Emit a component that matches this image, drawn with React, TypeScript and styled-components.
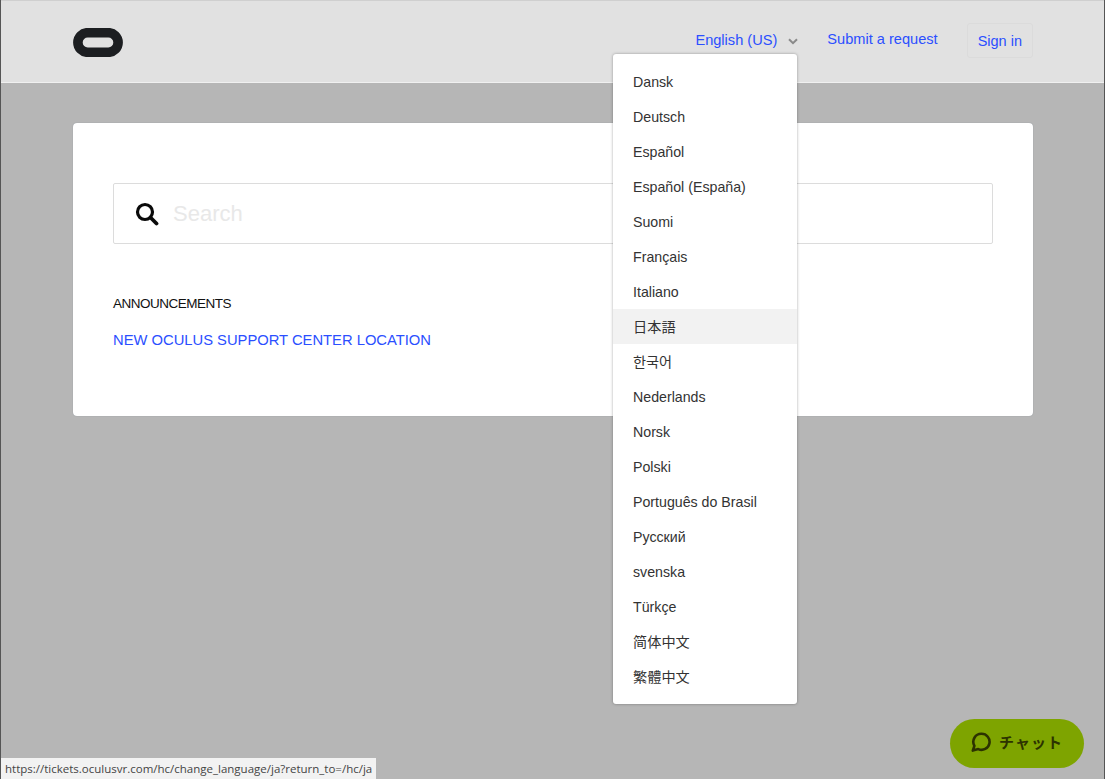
import React from "react";
import styled, { createGlobalStyle } from "styled-components";

const Global = createGlobalStyle`
  html, body { margin: 0; padding: 0; background: #b6b6b6; }
  body { font-family: "Liberation Sans", Arial, "Noto Sans CJK JP", sans-serif; }
  a { text-decoration: none; }
`;

const Page = styled.div`
  position: relative;
  width: 1105px;
  height: 779px;
  overflow: hidden;
  background: #b6b6b6;
  border-left: 1px solid #555;
  border-right: 1px solid #555;
  box-sizing: border-box;
`;

const Header = styled.header`
  height: 83px;
  box-sizing: border-box;
  background: #e1e1e1;
  border-top: 1px solid #cfcfcf;
  border-bottom: 1px solid #f0f0f0;
  padding: 0 71px 0 72px;
  display: flex;
  align-items: center;
  justify-content: space-between;
`;

const Logo = styled.svg`
  width: 50px;
  height: 29px;
  margin-top: 2px;
`;

const Nav = styled.nav`
  display: flex;
  align-items: center;
`;

const LangToggle = styled.a`
  display: flex;
  align-items: center;
  color: #2b4fff;
  font-size: 14.6px;
  margin-right: 29px;
  position: relative;
  top: -2px;
`;

const Chevron = styled.svg`
  width: 10px;
  height: 7px;
  margin-left: 11px;
  margin-top: 4px;
`;

const NavLink = styled.a`
  color: #2b4fff;
  font-size: 14.6px;
  margin-right: 29px;
  position: relative;
  top: -3px;
`;

const SignIn = styled.a`
  color: #2b4fff;
  font-size: 14.5px;
  height: 33px;
  line-height: 34px;
  padding: 0 10px;
  border: 1px solid #dbdbdb;
  border-radius: 3px;
  margin-top: -2px;
`;

const Main = styled.main`
  padding: 40px 71px 0 72px;
`;

const Card = styled.section`
  background: #fff;
  border-radius: 4px;
  height: 293px;
  box-sizing: border-box;
  padding: 60px 40px 0;
  box-shadow: 0 0 1px rgba(60, 70, 90, 0.45);
`;

const SearchBox = styled.div`
  height: 61px;
  box-sizing: border-box;
  border: 1px solid #dcdcdc;
  border-radius: 2px;
  display: flex;
  align-items: center;
  padding-left: 21px;
`;

const SearchIcon = styled.svg`
  width: 24px;
  height: 24px;
  flex: none;
  margin-right: 14px;
`;

const Placeholder = styled.span`
  font-size: 22px;
  color: #e8e8e8;
`;

const SectionTitle = styled.h2`
  margin: 52px 0 0;
  font-size: 13.5px;
  font-weight: 400;
  line-height: 16px;
  color: #111;
  letter-spacing: -0.5px;
`;

const Announcement = styled.a`
  display: block;
  margin-top: 20px;
  font-size: 14.75px;
  line-height: 17px;
  color: #2b4fff;
`;

const Menu = styled.ul`
  position: absolute;
  left: 612px;
  top: 54px;
  width: 184px;
  height: 650px;
  box-sizing: border-box;
  margin: 0;
  padding: 10px 0 0;
  list-style: none;
  background: #fff;
  border-radius: 3px;
  box-shadow: 0 0 3px rgba(0, 0, 0, 0.35);
`;

const MenuItem = styled.li<{ $active?: boolean }>`
  height: 35px;
  line-height: 37px;
  padding-left: 20px;
  font-size: 14.2px;
  color: #333;
  background: ${(p) => (p.$active ? "#f2f2f2" : "transparent")};
`;

const ChatButton = styled.button`
  position: absolute;
  left: 949px;
  top: 719px;
  width: 134px;
  height: 49px;
  border: 0;
  border-radius: 25px;
  background: #7ea400;
  color: #2c3300;
  display: flex;
  align-items: center;
  justify-content: center;
  gap: 8px;
  font-family: "Noto Sans CJK JP", sans-serif;
  font-size: 15px;
  font-weight: 700;
  letter-spacing: 1px;
  padding: 0 0 4px 0;
`;

const ChatIcon = styled.svg`
  width: 20px;
  height: 20px;
`;

const StatusBar = styled.div`
  position: absolute;
  left: -1px;
  bottom: 0;
  height: 21px;
  line-height: 22px;
  padding: 0 4px 0 5px;
  background: #f2f2f2;
  color: #444;
  font-family: "Open Sans", sans-serif;
  font-size: 11.5px;
  white-space: nowrap;
`;

const languages = [
  "Dansk", "Deutsch", "Español", "Español (España)", "Suomi", "Français",
  "Italiano", "日本語", "한국어", "Nederlands", "Norsk", "Polski",
  "Português do Brasil", "Русский", "svenska", "Türkçe", "简体中文", "繁體中文",
];

export default function App() {
  return (
    <Page>
      <Global />
      <Header>
        <Logo viewBox="0 0 50 29" aria-label="Oculus">
          <rect x="4.9" y="4.7" width="40.2" height="19.6" rx="9.8" fill="none" stroke="#1c1e21" strokeWidth="9.6" />
        </Logo>
        <Nav>
          <LangToggle href="#">
            English (US)
            <Chevron viewBox="0 0 10 7">
              <path d="M1 1.2 L5 5.2 L9 1.2" fill="none" stroke="#8a8a8a" strokeWidth="2" />
            </Chevron>
          </LangToggle>
          <NavLink href="#">Submit a request</NavLink>
          <SignIn href="#">Sign in</SignIn>
        </Nav>
      </Header>
      <Main>
        <Card>
          <SearchBox>
            <SearchIcon viewBox="0 0 24 24">
              <circle cx="10" cy="10" r="7.5" fill="none" stroke="#0a0a0a" strokeWidth="3.2" />
              <path d="M15.5 15.5 L21.5 21.5" stroke="#0a0a0a" strokeWidth="3.8" strokeLinecap="round" />
            </SearchIcon>
            <Placeholder>Search</Placeholder>
          </SearchBox>
          <SectionTitle>ANNOUNCEMENTS</SectionTitle>
          <Announcement href="#">NEW OCULUS SUPPORT CENTER LOCATION</Announcement>
        </Card>
      </Main>
      <Menu>
        {languages.map((l) => (
          <MenuItem key={l} $active={l === "日本語"}>{l}</MenuItem>
        ))}
      </Menu>
      <ChatButton>
        <ChatIcon viewBox="0 0 20 20">
          <path d="M10.5 1.8 a8 8 0 1 1 -3.2 15.3 L1.8 18.6 L3.4 13.8 A8 8 0 0 1 10.5 1.8 Z" fill="none" stroke="#2c3300" strokeWidth="2.6" strokeLinejoin="round" />
        </ChatIcon>
        チャット
      </ChatButton>
      <StatusBar>https://tickets.oculusvr.com/hc/change_language/ja?return_to=/hc/ja</StatusBar>
    </Page>
  );
}
